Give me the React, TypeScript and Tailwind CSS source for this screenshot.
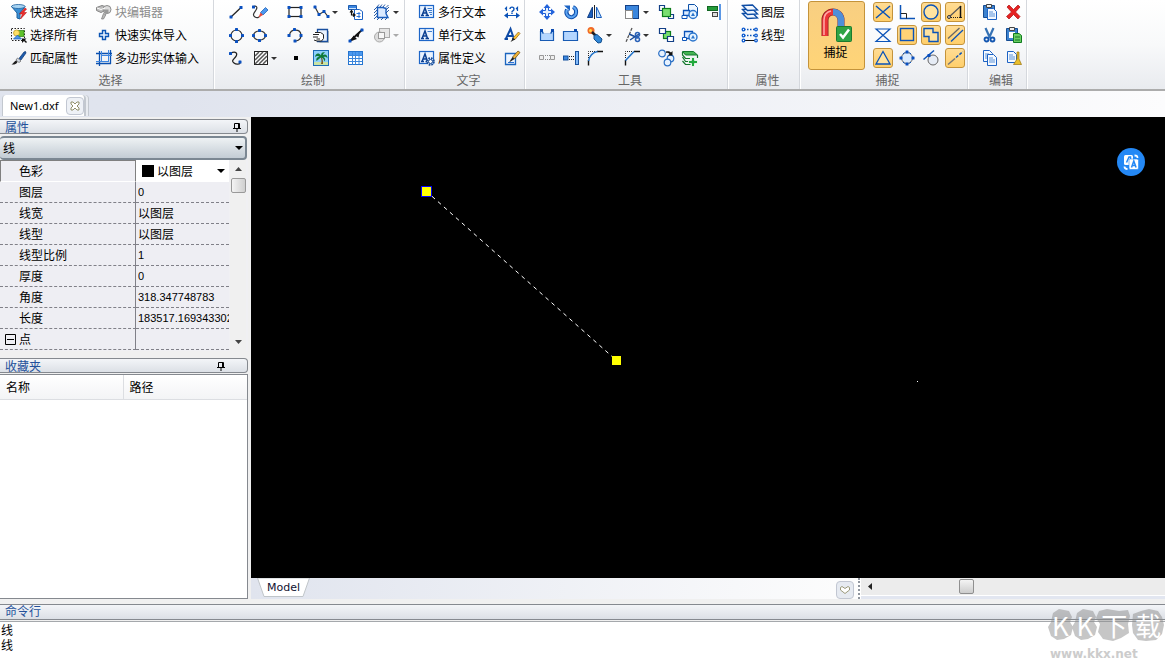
import type { ReactNode } from "react";

const BLUE = "#0b53b8";

const Dots = ({ at }: { at: number[][] }) => (
  <>
    {at.map(([x, y], i) => (
      <rect key={i} x={x - 1.5} y={y - 1.5} width="3" height="3" rx="0.5" fill="#0a50c0" />
    ))}
  </>
);

const Letter = ({ children }: { children?: ReactNode }) => (
  <>
    <rect x="1.500" y="2.500" width="14" height="12" fill="#eaf3ff" stroke="#1d66c8" strokeWidth="1.200" />
    <path d="M3 12.500h3M7.500 12.500h3.500M4 12.500 7 5l2.500 7.500M5 10h3.500" fill="none" stroke="#0a3f92" strokeWidth="1.500" />
    {children}
  </>
);

const Sheet = ({ x, y }: { x: number; y: number }) => (
  <g transform={`translate(${x} ${y})`}>
    <path d="M.5.5h6l3 3v8h-9z" fill="#f4f9ff" stroke="#1c62c4" />
    <path d="M2 4h4M2 6h6M2 8h6" stroke="#5a92d8" />
  </g>
);

const ICONS: Record<string, ReactNode> = {
  quickSelect: (
    <>
      <path d="M1.500 3.500 7 10v5l3 1v-6l5-6.500z" fill="#3a8fd4" stroke="#1d609d" />
      <ellipse cx="8.300" cy="3.500" rx="6.800" ry="2" fill="#a9d4f2" stroke="#1d609d" strokeWidth=".8" />
      <path d="M15 5 9.500 11h3l-2 5 6-6.500h-3L16.500 6z" fill="#ee2c2c" stroke="#b81414" strokeWidth=".6" />
    </>
  ),
  selectAll: (
    <>
      <rect x="1.500" y="2.500" width="13" height="12" fill="none" stroke="#222" strokeDasharray="1.500 1.500" />
      <rect x="8" y="4.500" width="6" height="6" fill="#5fc22c" stroke="#2a8012" strokeWidth=".7" />
      <circle cx="6.500" cy="7" r="3" fill="#ffe166" stroke="#b9921b" strokeWidth=".7" />
      <path d="m3.500 13 4-4 4 4z" fill="#4a95e8" stroke="#195bb0" strokeWidth=".7" />
      <path d="M12 12.500h4.500l-1.500 1.500 2 2-1 1-2-2-2 2z" fill="#111" />
    </>
  ),
  matchProps: (
    <>
      <path d="M9 9.500 14 3l1.500-.5.500 1.500-5 7z" fill="#1c5cae" stroke="#0b346e" strokeWidth=".7" />
      <path d="m7.500 9 3.500 3-2 1.500L6 11z" fill="#d5dde8" stroke="#444" strokeWidth=".6" />
      <path d="M6 11.500c-1.500 1-2.500 2.500-4.500 4 2.500.3 5-.3 6-2.500z" fill="#1c1c1c" />
    </>
  ),
  blockEditor: (
    <>
      <path d="M1.500 4.500 7 2.500l3 1v4l-4 2-4.500-2z" fill="#bdbdbd" stroke="#858585" />
      <circle cx="12" cy="6.500" r="4" fill="#ddd" stroke="#8b8b8b" />
      <path d="M8.500 6.500h5v4h-3.500z" fill="#999" />
      <path d="m6.500 16 2-5.500 2.500 1-2.500 4.500z" fill="#bbb" stroke="#777" strokeWidth=".7" />
      <path d="m2 5 4 1.500L10 5" stroke="#fff" fill="none" />
    </>
  ),
  quickImport: <path d="M7.500 4.500h3v3h3v3h-3v3h-3v-3h-3v-3h3z" fill="#e8f3ff" stroke="#0c55b4" strokeWidth="1.400" />,
  polyInput: (
    <>
      <path d="M4.500 2v15M15.500 1v14M1 4.500h16M1 14.500h15" stroke="#0a50b0" fill="none" strokeWidth="1.300" />
      <path d="M6.500 2v10.500M13.500 1v12M6 6.500h11M1 12.500h13" stroke="#3e86e0" fill="none" />
    </>
  ),
  line: (
    <>
      <path d="M4 14 14 4.500" stroke="#222" strokeWidth="1.300" />
      <Dots at={[[4, 14], [14, 4.500]]} />
    </>
  ),
  freehand: (
    <>
      <path d="M2 4c3-2 5 0 3 3s-4 5-1 7 5-1 5-1" fill="none" stroke="#333" strokeWidth="1.200" />
      <path d="m9.500 9.500 5-5 2.500 2.500-5 5z" fill="#4b97ee" stroke="#1458b0" strokeWidth=".7" />
      <path d="m9.500 9.500 2.500 2.500-4.500 2.500z" fill="#e84a3c" />
      <Dots at={[[2.500, 4]]} />
    </>
  ),
  rectangle: (
    <>
      <rect x="3" y="4.500" width="12" height="9" fill="none" stroke="#222" strokeWidth="1.200" />
      <Dots at={[[3, 4.500], [15, 4.500], [3, 13.500], [15, 13.500]]} />
    </>
  ),
  polyline: (
    <>
      <path d="m3 4 4 7.500 5-3 4 5" fill="none" stroke="#333" strokeWidth="1.200" />
      <Dots at={[[3, 4], [7, 11.500], [12, 8.500], [16, 13.500]]} />
    </>
  ),
  insertBlock: (
    <>
      <path d="M1.500 2.500h8v4h-8z" fill="#3c86e0" stroke="#1c5cb0" />
      <path d="M2 5.500h7" stroke="#cfe5ff" />
      <path d="M7.500 6.500h5l3 2v8h-8z" fill="#fff" stroke="#1c62c4" />
      <path d="M9.500 10.500h4M9.500 13.500h4M12 9v6" stroke="#2b72d6" />
      <path d="M4.500 8v4h3M3 9.500l1.500-2L6 9.500M6 10.500 8 12l-2 1.500" fill="none" stroke="#111" strokeWidth="1.200" />
    </>
  ),
  region: (
    <>
      <path d="M4.500 4.500H10l3 1v5l2 4h-10.500z" fill="#dbeaff" stroke="#1a5dbd" strokeWidth="1.400" />
      <path d="m4 4 2-2.500m1 2.500 2-2.500m1 2.500 2-2.500m1 3 2.500-2.500m-2.500 5 3-3m-3 6 3-3M1 7l3-3M1 10l3-3M1 13l3-3M1 16l3-3M4 17l2-2m2 2 2-2m2 2 2-2" stroke="#174d9c" strokeWidth=".9" />
    </>
  ),
  circle: (
    <>
      <circle cx="9.500" cy="9.500" r="5.500" fill="none" stroke="#333" strokeWidth="1.200" />
      <Dots at={[[9.500, 3.500], [3.500, 9.500], [15.500, 9.500], [9.500, 15.500]]} />
    </>
  ),
  ellipse: (
    <>
      <ellipse cx="8.500" cy="9.500" rx="6" ry="4.500" fill="none" stroke="#333" strokeWidth="1.200" />
      <Dots at={[[8.500, 4.500], [2.500, 9.500], [14.500, 9.500], [8.500, 14.500]]} />
    </>
  ),
  arc: (
    <>
      <path d="M3.500 9c1-6.500 11-6.500 11.500 0 0 3-2 5.500-5 6" fill="none" stroke="#333" strokeWidth="1.200" />
      <Dots at={[[3, 9.500], [8.500, 3.500], [15, 9.500], [9, 15]]} />
    </>
  ),
  blockPage: (
    <>
      <path d="M5.500 3.500h10v12h-10z" fill="#eaf3ff" stroke="#194f9f" strokeWidth="1.300" />
      <path d="M16.500 5v11.500h-9" stroke="#9ab" fill="none" />
      <path d="M3 6.500h5.500l3 2v4l-2 2.500H5l-3-1" fill="#fff" stroke="#222" />
      <path d="M1 8.500h6m-6 2.500h5M4.500 13H8" fill="none" stroke="#222" />
    </>
  ),
  arrowLine: (
    <>
      <path d="M3 15 15.500 3.500" stroke="#111" strokeWidth="1.700" />
      <path d="m3 15.500 3.500-6 3.500 3.500zM8 9.500l5-4.500-1.500 6.500z" fill="#111" />
      <Dots at={[[3, 15], [15, 4]]} />
    </>
  ),
  wipeout: (
    <>
      <rect x="6.500" y="2.500" width="10" height="9" fill="#e6e6e6" stroke="#aaa" />
      <circle cx="6.500" cy="11" r="5" fill="#ddd" stroke="#aaa" />
      <rect x="5.500" y="6.500" width="6" height="6" fill="#f7f7f7" stroke="#999" />
    </>
  ),
  spline: (
    <>
      <path d="M3.500 4.500c5-3 8 0 5 3.500s-4 4-1.500 6 6 1 6 0" fill="none" stroke="#222" strokeWidth="1.300" />
      <Dots at={[[3.500, 4.500], [13, 13]]} />
    </>
  ),
  hatch: (
    <>
      <rect x="3.500" y="2.500" width="13" height="13" fill="#fff" stroke="#222" />
      <path d="m4 7 4-4M4 11l8-8M4 15 16 3M8 15l8-8m-4 8 4-4" stroke="#555" strokeWidth="1.500" />
    </>
  ),
  point: <rect x="8" y="7" width="4" height="4" fill="#000" />,
  image: (
    <>
      <rect x="1.500" y="1.500" width="15" height="15" fill="#8ed0fa" stroke="#1c6cb6" />
      <path d="M2 13h14v3H2z" fill="#c9e3a4" />
      <path d="M8.500 8c1.500 3 1 5 .5 7h2c.3-3-.3-5-1.500-7z" fill="#7b5b24" />
      <path d="M9 6.500C6.500 3 3.500 4.500 3 8c2-1.500 3-1 4.500 0C4.500 8 4 10 4.500 12 7 10 8 9 9 8.500c2 .5 3 1.500 3.500 4 1.500-2 .5-3.500-1-4.500 2-.5 3 0 4 1.500 0-3.500-2-5-4.500-3.500 0-1 1-2 2-2.500-2-1-4 0-4 3z" fill="#0f7a38" />
    </>
  ),
  table: (
    <>
      <rect x="1.500" y="2.500" width="14" height="13" fill="#fff" stroke="#2474d0" />
      <path d="M2 3h13v3H2z" fill="#4c9af0" />
      <path d="M1.500 6.500h14m-14 3h14m-14 3h14M5.500 3v12.500M8.500 3v12.500m3.500-12.500v12.500" stroke="#3a86dc" />
    </>
  ),
  mtext: <Letter><path d="M9.500 5.500H14m-4 2h4m-3 2h3m-2 2h2" stroke="#3f7ed0" /></Letter>,
  stext: <Letter><path d="M9.500 5.500H14" stroke="#3f7ed0" /></Letter>,
  attdef: (
    <Letter>
      <circle cx="12.500" cy="12.500" r="3.300" fill="#dceaff" stroke="#174b96" strokeWidth="2" strokeDasharray="1.600 1" />
      <circle cx="12.500" cy="12.500" r="2" fill="#fff" stroke="#174b96" />
    </Letter>
  ),
  fieldWidth: (
    <>
      <path d="M3.500 8V4.500L2 6M14.500 8V4.500L13 6M4 12.500h10" fill="none" stroke={BLUE} strokeWidth="1.200" />
      <path d="M5 9.500 1 12.500l4 3zm8 0 4 3-4 3z" fill={BLUE} />
      <path d="M7 6c0-2.500 4-2.500 4 0S9 7.500 9 9m0 .5V11" fill="none" stroke={BLUE} strokeWidth="1.400" />
    </>
  ),
  editText: (
    <>
      <path d="M1.500 13h3.500m4 0h3M3 12.500 7.500 3 11 13M4.500 10h5" fill="none" stroke="#0e4aa5" strokeWidth="2" />
      <path d="m10 12 5.500-6 1.500 1.500-5 6z" fill="#ffc534" stroke="#8b5d12" strokeWidth=".7" />
      <path d="m10 12 2 1.500L7.500 16z" fill="#222" />
    </>
  ),
  editPage: (
    <>
      <path d="M2.500 4.500h10v11h-10z" fill="#eff6ff" stroke="#1b65be" strokeWidth="1.300" />
      <path d="M5 13.500h6" stroke="#2b72d6" />
      <path d="m9.500 8 5.500-6 2 1.500-5.500 6.500z" fill="#f2b638" stroke="#60400c" strokeWidth=".7" />
      <path d="m9.500 8 2 2L6 13.500z" fill="#222" />
    </>
  ),
  move: (
    <>
      <path d="M7.500 4h3v3.500H14v3h-3.500V14h-3v-3.500H4v-3h3.500z" fill="#e4f0ff" stroke="#1d5fd8" />
      <path d="M9 1 5.500 5h7zM9 17l-3.500-4h7zM1 9l4-3.500v7zM17 9l-4-3.500v7z" fill="#2464dc" />
    </>
  ),
  rotate: (
    <>
      <path d="M11 4c4.500 2 4 8.500-.5 10-4 1-7.500-3-5.500-7.500" fill="none" stroke="#0d4ba8" strokeWidth="4" />
      <path d="M11 4c4.500 2 4 8.500-.5 10-4 1-7.500-3-5.500-7.500" fill="none" stroke="#5da5f2" strokeWidth="2" />
      <path d="M2 2.500h6V8z" fill="#1a63c4" />
    </>
  ),
  mirror: (
    <>
      <path d="M6.500 4v10.500H1.500z" fill="#1a5fbe" stroke="#123f86" />
      <path d="M10.500 4v10.500h5z" fill="#b8dafc" stroke="#1a5fbe" />
      <path d="M8.500 2v14" stroke="#222" />
    </>
  ),
  scale: (
    <>
      <rect x="2.500" y="2.500" width="13" height="13" fill="#3b86dd" stroke="#123f86" />
      <rect x="2" y="7" width="8" height="10" fill="#fff" />
      <rect x="2.500" y="7.500" width="7" height="8" fill="none" stroke="#111" strokeDasharray="1 1" />
    </>
  ),
  front: (
    <>
      <path d="M2.500 2.500h5v5h-5zm9 9h5v4h-5z" fill="#fff" stroke="#123f86" strokeWidth="1.200" />
      <rect x="5.500" y="5.500" width="8" height="8" fill="#79df70" stroke="#0d7d1c" strokeWidth="1.200" />
    </>
  ),
  copyShape: (
    <>
      <path d="M7.500 7V1.500h6l3 3v8h-4" fill="#eef6ff" stroke="#0d50a7" />
      <path d="M2.500 7.500h6v5h-6z" fill="#deedff" stroke={BLUE} strokeWidth="1.300" />
      <path d="M1 12.500h5v3H1z" fill="#fff" stroke={BLUE} />
      <circle cx="12" cy="11.500" r="4" fill="#e6f4ff" stroke="#2b75cd" strokeWidth="1.400" />
      <path d="m12 9.500 2 3.500h-4z" fill="#2b75cd" />
    </>
  ),
  align: (
    <>
      <rect x="2.500" y="3.500" width="10" height="4" fill="#249b39" stroke="#116622" />
      <rect x="7.500" y="9.500" width="5" height="4" fill="#ddd" stroke="#444" />
      <path d="M15 1v16" stroke="#2474dc" strokeWidth="1.500" />
    </>
  ),
  breakOpen: (
    <>
      <path d="M2.500 5.500h2v1.500h9V5.500h2v9h-13z" fill="#b4d6ff" stroke="#185bb3" strokeWidth="1.200" />
      <path d="M6 6.500h6" stroke="#f4f8ff" strokeWidth="2" />
      <path d="M2 3h3v3H2zM13 3h3v3h-3z" fill="#0a4ab0" />
    </>
  ),
  breakPoint: (
    <>
      <path d="M1.500 5.500h14v9h-14z" fill="#b4d6ff" stroke="#185bb3" strokeWidth="1.200" />
      <path d="M12 3h3v3h-3z" fill="#0a4ab0" />
    </>
  ),
  explode: (
    <>
      <circle cx="5" cy="4.500" r="3.500" fill="#f16a28" />
      <circle cx="4.500" cy="4.500" r="1.500" fill="#ffdb45" />
      <path d="m6 6 4 4" stroke="#222" strokeWidth="2.500" />
      <path d="m8 9.500 3-1 5 4.500-1 3.500-3 .5-4-4z" fill="#3288d6" stroke="#114f90" />
    </>
  ),
  trim: (
    <>
      <path d="M9 2 3 16" stroke="#555" strokeWidth="1.300" strokeDasharray="3 1" />
      <path d="m6 8 9 4m-8 2 9-6" stroke="#164b9b" strokeWidth="1.500" />
      <circle cx="14.500" cy="8.500" r="2" fill="none" stroke="#2a62b8" strokeWidth="1.600" />
      <circle cx="14.500" cy="13.500" r="2" fill="none" stroke="#2a62b8" strokeWidth="1.600" />
    </>
  ),
  back: (
    <>
      <rect x="6.500" y="5.500" width="7" height="7" fill="#79df70" stroke="#0d7d1c" strokeWidth="1.200" />
      <path d="M2.500 2.500h6v5h-6zm8 8h6v5h-6z" fill="#fff" stroke="#123f86" strokeWidth="1.200" />
    </>
  ),
  offsetShape: (
    <>
      <path d="M3.500 5.500h8v7h-8z" fill="#deedff" stroke={BLUE} strokeWidth="1.300" />
      <path d="M1.500 11.500h4v3h-4z" fill="#fff" stroke={BLUE} />
      <circle cx="12" cy="11" r="4" fill="#e6f4ff" stroke="#2b75cd" strokeWidth="1.400" />
      <path d="m12 9 2 3.500h-4z" fill="#2b75cd" />
    </>
  ),
  stretch: (
    <>
      <path d="M1.500 6.500h4v4h-4zm11 0h4v4h-4z" fill="#eee" stroke="#999" />
      <path d="M7 6.500h5m-5 4h5" stroke="#888" strokeDasharray="1 1" />
    </>
  ),
  extend: (
    <>
      <rect x="1.500" y="7" width="4.500" height="4" fill="#3b86dd" stroke="#17529e" />
      <path d="M7 7.500h5m-5 3h5" stroke="#222" strokeDasharray="1 1" />
      <rect x="13.500" y="2.500" width="3" height="13" fill="#82bafa" stroke="#17529e" />
    </>
  ),
  fillet: (
    <>
      <path d="M2.500 9V2.500H9" fill="none" stroke="#222" strokeDasharray="1 1" />
      <path d="M2.500 11v5.500M11 2.500h6" stroke="#111" strokeWidth="1.400" />
      <path d="M2.500 12c1-5 4-8.500 9-9.500" fill="none" stroke="#2474c8" strokeWidth="1.500" />
    </>
  ),
  chamfer: (
    <>
      <path d="M2.500 9V2.500H9" fill="none" stroke="#222" strokeDasharray="1 1" />
      <path d="M2.500 11v5.500M11 2.500h6" stroke="#111" strokeWidth="1.400" />
      <path d="m2.500 11.500 8.500-9" stroke="#2474c8" strokeWidth="1.600" />
    </>
  ),
  cycle: (
    <>
      <g fill="#e7f2ff" stroke="#2a6fc4" strokeWidth="1.200">
        <circle cx="5" cy="4.500" r="3.300" />
        <circle cx="13.500" cy="9.500" r="3.300" />
        <circle cx="10.500" cy="13.500" r="3.300" />
      </g>
      <path d="M9 2.500c2-.5 4 0 5 1L15.500 2v4.500H11L12.500 5c-1-1-2-1.500-3.500-1z" fill="#111" />
    </>
  ),
  layerAdd: (
    <>
      <path d="m4.500 6-3-3.500h11l4 3.500z" fill="#45b454" stroke="#13792c" />
      <path d="M1.500 3v3l3 3.500H9M1.500 8l3 4.500h3M1.500 12l3 3.500h5M16.500 6v3" stroke="#13792c" strokeWidth="1.200" fill="none" />
      <path d="M10.500 8.500h3v3h3v3h-3v3h-3v-3h-3v-3h3z" fill="#20a83b" stroke="#fff" strokeWidth=".8" />
    </>
  ),
  layers: (
    <>
      {[10, 6, 2].map((y) => (
        <path key={y} transform={`translate(0 ${y})`} d="m1.500.5 10-.5 5 5-10 .500z" fill="#f2f8ff" stroke="#0e4da5" strokeWidth="1.300" />
      ))}
    </>
  ),
  linetype: (
    <>
      <path d="M3 3.500h12M3 9.500h12" stroke={BLUE} strokeWidth="1.300" strokeDasharray="1.500 1.500" />
      <path d="M4 14.500h11" stroke="#111" />
      {[3.500, 9.500, 14.500].map((y) => (
        <g key={y} fill="#fff" stroke="#0d5bd0" strokeWidth="1.300">
          <circle cx="2.500" cy={y} r="1.300" />
          <circle cx="15" cy={y} r="1.300" />
        </g>
      ))}
    </>
  ),
  snapCross: <path d="m2 3 14 12M16 3 2 15" stroke={BLUE} strokeWidth="1.500" />,
  snapPerp: (
    <>
      <path d="M2.500 2v13.500H17" fill="none" stroke={BLUE} strokeWidth="1.500" />
      <path d="M3 10.500h5.500v5" fill="none" stroke="#222" />
    </>
  ),
  snapCenter: <circle cx="9" cy="9" r="7" fill="#ffe3a0" stroke={BLUE} strokeWidth="1.400" />,
  snapAngle: (
    <>
      <path d="M3 14 15 3" fill="none" stroke="#555" strokeWidth="1.200" />
      <path d="M14.500 3v12" stroke="#111" strokeWidth="1.500" />
      <path d="M3 14.500h13" stroke="#222" strokeDasharray="1 1" />
      <circle cx="3" cy="14" r="1.500" fill="#ccc" stroke="#333" />
    </>
  ),
  snapNearest: <path d="M2 3h14L2 15.500h14z" fill="none" stroke={BLUE} strokeWidth="1.200" />,
  snapEnd: <rect x="2.500" y="2.500" width="13" height="12" fill="#ffd376" stroke={BLUE} strokeWidth="1.400" />,
  snapInsert: <path d="M2 2.500h9v4h5v9H7v-5H2z" fill="#ffe3a0" stroke={BLUE} strokeWidth="1.400" />,
  snapParallel: (
    <>
      <path d="M2 12.500 13.500 2" stroke="#666" strokeWidth="1.300" />
      <path d="M5 15.500 17 4" stroke={BLUE} strokeWidth="1.300" />
    </>
  ),
  snapMid: <path d="M9 2.500 16 15H2z" fill="#ffe3a0" stroke={BLUE} strokeWidth="1.300" />,
  snapQuad: (
    <>
      <circle cx="9" cy="9" r="5.500" fill="#dcecff" stroke="#666" />
      <Dots at={[[9, 3], [3, 9], [15, 9], [9, 15]]} />
      <path d="m5 5 1.500-1.500M13 5l-1.500-1.500M5 13l1.500 1.500M13 13l-1.500 1.500" stroke={BLUE} />
    </>
  ),
  snapTangent: (
    <>
      <circle cx="11" cy="11" r="5" fill="#e6ecf5" stroke="#666" />
      <path d="M1.500 10.500 12 1.500" stroke={BLUE} strokeWidth="1.500" />
      <Dots at={[[7, 6.500]]} />
    </>
  ),
  snapExtension: (
    <>
      <path d="m2 15.500 7-6" stroke="#777" strokeWidth="1.500" />
      <path d="m10 8.500 7-6" stroke={BLUE} strokeWidth="1.500" strokeDasharray="3 1.500" />
    </>
  ),
  paste: (
    <>
      <path d="M2.500 2.500h11v12h-11z" fill="#3c82cf" stroke="#164c92" />
      <path d="M5.500 1.500h5v3h-5z" fill="#eee" stroke="#444" />
      <Sheet x={6} y={5} />
    </>
  ),
  remove: (
    <path d="m2 4 2-2 4.500 4.500L13 2l2 2-4.500 5 4.500 4.500-2 2.500-4.500-4.500L4 16l-2.500-2.500L6.500 9z" fill="#e62222" stroke="#ae1010" strokeWidth=".7" />
  ),
  cut: (
    <>
      <path d="m4.500 2 4.500 10M12.500 2 8 12" stroke="#3672b5" strokeWidth="2.200" />
      <g fill="none" stroke="#1356b0" strokeWidth="1.800">
        <circle cx="5.500" cy="13.500" r="2" />
        <circle cx="11.500" cy="13.500" r="2" />
      </g>
    </>
  ),
  pasteBlock: (
    <>
      <path d="M1.500 2.500h11v12h-11z" fill="#3c82cf" stroke="#164c92" />
      <path d="M4.500 1.500h5v3h-5z" fill="#eee" stroke="#444" />
      <path d="M4 6h6v6H4z" fill="#fff" />
      <path d="M8.500 7.500h5.500l2.500 2v7h-8z" fill="#69cf60" stroke="#117a20" />
      <path d="M10 11h5m-5 3h5" stroke="#16752b" />
    </>
  ),
  copy: (
    <>
      <Sheet x={2} y={1} />
      <Sheet x={6} y={5} />
    </>
  ),
  purge: (
    <>
      <Sheet x={2} y={2} />
      <path d="M12 3h2v7l2.500 5.500h-8L12 10z" fill="#e9be2c" stroke="#9a7410" strokeWidth=".7" />
    </>
  ),
};

type Tool = { icon: string; name: string; menu?: boolean; disabled?: boolean } | null;

const t = (icon: string, name: string, menu = false, disabled = false): Tool => ({ icon, name, menu, disabled });

const DRAW_TOOLS: Tool[] = [
  t("line", "直线"), t("freehand", "徒手画"), t("rectangle", "矩形"), t("polyline", "多段线", true), t("insertBlock", "插入块"), t("region", "面域", true),
  t("circle", "圆"), t("ellipse", "椭圆"), t("arc", "圆弧"), t("blockPage", "块"), t("arrowLine", "引线"), t("wipeout", "遮罩", true, true),
  t("spline", "样条曲线"), t("hatch", "填充", true), t("point", "点"), t("image", "图像"), t("table", "表格"), null,
];

const EDIT_TOOLS: Tool[] = [
  t("move", "移动"), t("rotate", "旋转"), t("mirror", "镜像"), t("scale", "缩放", true), t("front", "前置"), t("copyShape", "复制实体"), t("align", "对齐"),
  t("breakOpen", "打断"), t("breakPoint", "打断于点"), t("explode", "分解", true), t("trim", "修剪", true), t("back", "后置"), t("offsetShape", "偏移"), null,
  t("stretch", "拉伸"), t("extend", "延伸"), t("fillet", "圆角"), t("chamfer", "倒角"), t("cycle", "循环"), t("layerAdd", "添加图层"), null,
];

const CLIPBOARD_TOOLS: Tool[] = [
  t("paste", "粘贴"), t("remove", "删除"),
  t("cut", "剪切"), t("pasteBlock", "粘贴为块"),
  t("copy", "复制"), t("purge", "清理"),
];

const SNAPS = [
  { icon: "snapCross", name: "交点", on: true },
  { icon: "snapPerp", name: "垂足", on: false },
  { icon: "snapCenter", name: "圆心", on: true },
  { icon: "snapAngle", name: "角度", on: true },
  { icon: "snapNearest", name: "最近点", on: false },
  { icon: "snapEnd", name: "端点", on: true },
  { icon: "snapInsert", name: "插入点", on: true },
  { icon: "snapParallel", name: "平行", on: true },
  { icon: "snapMid", name: "中点", on: true },
  { icon: "snapQuad", name: "象限点", on: false },
  { icon: "snapTangent", name: "切点", on: false },
  { icon: "snapExtension", name: "延长线", on: true },
];

const PROPERTIES = [
  { name: "图层", value: "0", numeric: true },
  { name: "线宽", value: "以图层", numeric: false },
  { name: "线型", value: "以图层", numeric: false },
  { name: "线型比例", value: "1", numeric: true },
  { name: "厚度", value: "0", numeric: true },
  { name: "角度", value: "318.347748783", numeric: true },
  { name: "长度", value: "183517.169343302", numeric: true },
];

function Icon({ name }: { name: string }) {
  return (
    <svg viewBox="0 0 18 18" className="size-[18px] shrink-0" aria-hidden="true">
      {ICONS[name]}
    </svg>
  );
}

function Caret({ className = "" }: { className?: string }) {
  return (
    <svg viewBox="0 0 8 4" className={`h-1 w-2 shrink-0 ${className}`} aria-hidden="true">
      <path d="M0 0h8L4 4z" fill="currentColor" />
    </svg>
  );
}

function ToolButton({ tool }: { tool: Tool }) {
  if (!tool) return <span />;
  return (
    <button
      type="button"
      aria-label={tool.name}
      disabled={tool.disabled}
      className="flex items-center gap-0.5 text-[#333] disabled:text-[#aaa]"
    >
      <Icon name={tool.icon} />
      {tool.menu && (
        <svg viewBox="0 0 6 3" className="h-[3px] w-1.5 shrink-0" aria-hidden="true">
          <path d="M0 0h6L3 3z" fill="currentColor" />
        </svg>
      )}
    </button>
  );
}

function LabelButton({ icon, text, disabled }: { icon: string; text: string; disabled?: boolean }) {
  return (
    <button
      type="button"
      disabled={disabled}
      className="flex items-center gap-0.5 whitespace-nowrap text-black disabled:text-[#8c8c8c]"
    >
      <Icon name={icon} />
      {text}
    </button>
  );
}

function Group({ title, className, children }: { title: string; className: string; children: ReactNode }) {
  return (
    <section
      className={`flex shrink-0 flex-col justify-between border-r border-[#d5d8dd] pt-0.5 shadow-[1px_0_0_#fff] ${className}`}
    >
      {children}
      <h2 className="h-[18px] pl-2 text-center leading-[18px] text-[#666]">{title}</h2>
    </section>
  );
}

function Ribbon() {
  return (
    <header className="flex h-[91px] shrink-0 overflow-hidden border-b-2 border-[#acacac] bg-linear-to-b from-white via-[#f8f9fa] to-[#e9ebef]">
      <Group title="选择" className="w-[214px]">
        <div className="grid auto-rows-[20px] grid-cols-[85px_auto] gap-y-[3px] pl-2.5">
          <LabelButton icon="quickSelect" text="快速选择" />
          <LabelButton icon="blockEditor" text="块编辑器" disabled />
          <LabelButton icon="selectAll" text="选择所有" />
          <LabelButton icon="quickImport" text="快速实体导入" />
          <LabelButton icon="matchProps" text="匹配属性" />
          <LabelButton icon="polyInput" text="多边形实体输入" />
        </div>
      </Group>
      <Group title="绘制" className="w-[191px]">
        <div className="grid auto-rows-[20px] grid-cols-[24px_35px_26px_35px_26px_30px] gap-y-[3px] pl-[13px]">
          {DRAW_TOOLS.map((tool, i) => (
            <ToolButton key={i} tool={tool} />
          ))}
        </div>
      </Group>
      <Group title="文字" className="w-[120px]">
        <div className="grid auto-rows-[20px] grid-cols-[85px_18px] gap-y-[3px] pl-[13px]">
          <LabelButton icon="mtext" text="多行文本" />
          <ToolButton tool={t("fieldWidth", "文字宽度")} />
          <LabelButton icon="stext" text="单行文本" />
          <ToolButton tool={t("editText", "编辑文字")} />
          <LabelButton icon="attdef" text="属性定义" />
          <ToolButton tool={t("editPage", "编辑属性")} />
        </div>
      </Group>
      <Group title="工具" className="w-[203px]">
        <div className="grid auto-rows-[20px] grid-cols-[24px_24px_37px_34px_24px_24px_18px] gap-y-[3px] pl-[13px]">
          {EDIT_TOOLS.map((tool, i) => (
            <ToolButton key={i} tool={tool} />
          ))}
        </div>
      </Group>
      <Group title="属性" className="w-[72px]">
        <div className="grid auto-rows-[20px] gap-y-[3px] pl-[13px]">
          <LabelButton icon="layers" text="图层" />
          <LabelButton icon="linetype" text="线型" />
        </div>
      </Group>
      <Group title="捕捉" className="w-[168px]">
        <div className="flex gap-2 pl-2">
          <button
            type="button"
            aria-pressed="true"
            className="-mt-px flex h-[69px] w-[57px] flex-col items-center rounded-[3px] border border-[#c4933a] bg-linear-to-b from-[#f8cf82] to-[#ffd477] pt-1.5 pr-0.5 leading-4"
          >
            <svg viewBox="0 0 36 36" className="size-9" aria-hidden="true">
              <path d="M7 28V12a8 8 0 0 1 16 0v8" fill="none" stroke="#8b1f22" strokeWidth="7" />
              <path d="M7 28V12a8 8 0 0 1 8-8" fill="none" stroke="#ec3438" strokeWidth="5.500" />
              <path d="M15 4a8 8 0 0 1 8 8v8" fill="none" stroke="#4f8fd9" strokeWidth="6.500" />
              <path d="M6 27V12c0-5 3-8 7-9" fill="none" stroke="#ffaaa8" strokeWidth="1.500" />
              <rect x="18.500" y="18.500" width="15" height="15" rx="1" fill="#2fa344" stroke="#1b7b2e" />
              <path d="m22 26 3 3.500 6-8" fill="none" stroke="#fff" strokeWidth="2.500" />
            </svg>
            捕捉
          </button>
          <div className="grid auto-rows-[20px] grid-cols-[repeat(4,20px)] gap-x-1 gap-y-[3px]">
            {SNAPS.map((snap) => (
              <button
                key={snap.icon}
                type="button"
                aria-label={snap.name}
                aria-pressed={snap.on}
                className="rounded-[3px] border border-transparent aria-pressed:border-[#c4933a] aria-pressed:bg-linear-to-b aria-pressed:from-[#ffdc94] aria-pressed:to-[#ffcf6b]"
              >
                <Icon name={snap.icon} />
              </button>
            ))}
          </div>
        </div>
      </Group>
      <Group title="编辑" className="w-[59px]">
        <div className="grid auto-rows-[20px] grid-cols-[24px_18px] gap-y-[3px] pl-[13px]">
          {CLIPBOARD_TOOLS.map((tool, i) => (
            <ToolButton key={i} tool={tool} />
          ))}
        </div>
      </Group>
    </header>
  );
}

function PanelHeader({ title, pinClass }: { title: string; pinClass: string }) {
  return (
    <div
      className={`flex h-[15px] shrink-0 items-center justify-between rounded-r-sm border border-l-0 border-[#85898f] bg-linear-to-b from-[#f3f5f8] to-[#dce0e6] pl-[5px] ${pinClass}`}
    >
      <h2 className="leading-none text-[#23509a]">{title}</h2>
      <button type="button" aria-label="固定">
        <svg viewBox="0 0 8 10" className="h-2.5 w-2" aria-hidden="true">
          <path d="M1.500 6V1.500h5V6M0 6.500h8M4 6.500V10" fill="none" stroke="#000" />
          <path d="M5.500 1v5.500" stroke="#000" />
        </svg>
      </button>
    </div>
  );
}

function PropertyPanel() {
  return (
    <section className="flex shrink-0 flex-col">
      <PanelHeader title="属性" pinClass="pr-1.5" />
      <div className="relative mt-0.5 mr-px">
        <select
          aria-label="实体类型"
          className="block h-6 w-full appearance-none rounded-sm border-2 border-l-0 border-[#7b8792] bg-linear-to-b from-[#eef2f4] to-[#c3ccd4] pl-[3px] leading-5"
        >
          <option>线</option>
        </select>
        <Caret className="pointer-events-none absolute top-2.5 right-1" />
      </div>
      <div className="flex h-[191px] gap-px bg-[#f0f0f3] pr-0.5">
        <table className="w-[229px] table-fixed border-separate border-spacing-0 self-start bg-[#eeeef3]">
          <colgroup>
            <col className="w-[136px]" />
            <col />
          </colgroup>
          <tbody>
            <tr className="h-[22px]">
              <th scope="row" className="border border-[#808080] border-b-white p-0 pl-[18px] text-left font-normal">
                色彩
              </th>
              <td className="bg-white p-0">
                <div className="relative flex items-center pl-1.5">
                  <span className="size-3 bg-black" />
                  <select aria-label="色彩" className="h-5 flex-1 appearance-none pl-[3px] leading-5">
                    <option>以图层</option>
                  </select>
                  <Caret className="pointer-events-none absolute right-1" />
                </div>
              </td>
            </tr>
            {PROPERTIES.map((p) => (
              <tr key={p.name} className="h-[21px]">
                <th
                  scope="row"
                  className="border-r border-b border-[#808088] p-0 pl-[19px] text-left font-normal [border-bottom-style:dashed]"
                >
                  {p.name}
                </th>
                <td className="overflow-hidden border-b border-dashed border-[#808088] p-0">
                  <input
                    aria-label={p.name}
                    defaultValue={p.value}
                    className={`block h-5 w-full pl-0.5 leading-5 ${
                      p.numeric ? "font-['Liberation_Sans',sans-serif] text-[11px]" : "text-[12px]"
                    }`}
                  />
                </td>
              </tr>
            ))}
            <tr className="h-[21px]">
              <th
                scope="row"
                className="border-r border-b border-[#808088] p-0 pl-[5px] text-left font-normal [border-bottom-style:dashed]"
              >
                <button type="button" aria-expanded="true" className="flex items-center gap-[3px]">
                  <svg viewBox="0 0 11 11" className="size-[11px]" aria-hidden="true">
                    <path d="M.5.5h10v10H.5zM2 5.500h7" fill="none" stroke="#000" />
                  </svg>
                  点
                </button>
              </th>
              <td className="border-b border-dashed border-[#808088]" />
            </tr>
          </tbody>
        </table>
        <div className="flex flex-1 flex-col items-center bg-[#f0f0f0]">
          <button type="button" aria-label="向上滚动" className="flex h-[18px] w-full items-center justify-center">
            <svg viewBox="0 0 7 4" className="h-1 w-[7px]" aria-hidden="true">
              <path d="M0 4h7L3.500 0z" fill="#444" />
            </svg>
          </button>
          <div className="h-[15px] w-[15px] rounded-xs border border-[#999] bg-linear-to-r from-[#f4f4f4] to-[#cfcfcf]" />
          <button type="button" aria-label="向下滚动" className="mt-auto flex h-[18px] w-full items-center justify-center">
            <svg viewBox="0 0 7 4" className="h-1 w-[7px]" aria-hidden="true">
              <path d="M0 0h7L3.500 4z" fill="#444" />
            </svg>
          </button>
        </div>
      </div>
    </section>
  );
}

function FavoritesPanel() {
  return (
    <section className="mt-[7px] flex min-h-0 flex-1 flex-col">
      <PanelHeader title="收藏夹" pinClass="pr-[22px]" />
      <div className="mt-px flex-1 border border-l-0 border-[#85898f] bg-white">
        <table className="w-full table-fixed">
          <thead>
            <tr className="h-6 bg-linear-to-b from-white to-[#f3f4f6] text-left">
              <th className="w-[123px] border-r border-b border-[#dcdee2] p-0 pl-1.5 font-normal">名称</th>
              <th className="border-b border-[#dcdee2] p-0 pl-1.5 font-normal">路径</th>
            </tr>
          </thead>
        </table>
      </div>
    </section>
  );
}

function FileTabs() {
  return (
    <nav className="flex h-[26px] shrink-0 items-end bg-linear-to-r from-[#e0e4ee] from-15% to-[#fcfcfd] pb-px pl-0.5">
      <div className="flex h-[21px] items-center gap-[7px] rounded-t-sm border-r-2 border-l border-[#c3c8cf] bg-white pl-[7px] shadow-[2px_0_0_#e9ecf1,3px_0_0_#c3c8cf]">
        <a href="#new1" className="font-['Noto_Sans',sans-serif] text-[11px] leading-4">
          New1.dxf
        </a>
        <button
          type="button"
          aria-label="关闭"
          className="flex size-[18px] items-center justify-center rounded-sm border border-[#c2c7d2] bg-[#eef1f6]"
        >
          <svg viewBox="0 0 10 10" className="size-2.5" aria-hidden="true">
            <path d="M1 1h2l2 2 2-2h2v2L7 5l2 2v2H7L5 7 3 9H1V7l2-2-2-2z" fill="#fff" stroke="#85835c" strokeWidth=".9" />
          </svg>
        </button>
      </div>
    </nav>
  );
}

function DrawingArea() {
  return (
    <main className="relative min-h-0 flex-1 overflow-hidden bg-black">
      <svg className="block h-full w-full" role="img" aria-label="绘图区">
        <path d="M175 74 365 243" stroke="#fff" strokeDasharray="4 4" />
        <rect x="170" y="69" width="11" height="11" fill="#0000ff" />
        <rect x="171" y="70" width="9" height="9" fill="#ffff00" />
        <rect x="361" y="239" width="9" height="9" fill="#ffff00" />
        <rect x="666" y="264" width="1" height="1" fill="#fff" />
      </svg>
      <button
        type="button"
        aria-label="翻译"
        className="absolute top-[31px] right-5 flex size-7 items-center justify-center rounded-full bg-[#2488f5]"
      >
        <svg viewBox="0 0 16 16" className="size-4" aria-hidden="true">
          <rect x="1" y="1" width="9" height="10" rx="1.500" fill="#fff" />
          <path d="M3.500 8.500 6 3h1.500v2" stroke="#2488f5" fill="none" strokeWidth="1.500" />
          <rect x="6" y="5" width="9.500" height="10.500" rx="1.500" fill="#fff" stroke="#2488f5" strokeWidth=".6" />
          <path d="m8.500 13.500 2.300-6.500 2.300 6.500M9.500 11.500h3" stroke="#2488f5" fill="none" strokeWidth="1.500" />
          <path d="M11.500 1.500c2.500 0 3 .5 3 2.500M1.500 12.500c0 2 1 2.500 3 2.500" stroke="#fff" strokeWidth="1.800" fill="none" />
        </svg>
      </button>
    </main>
  );
}

function LayoutBar() {
  return (
    <footer className="flex h-[21px] shrink-0">
      <div className="flex flex-1 items-start justify-between bg-linear-to-r from-[#e0e4ee] to-[#fdfdfd] pr-1 pl-1.5">
        <button
          type="button"
          className="relative h-[19px] w-[53px] font-['DejaVu_Sans',sans-serif] text-[11px] leading-4 text-[#101030]"
        >
          <svg viewBox="0 0 53 19" className="absolute inset-0 h-full w-full" aria-hidden="true">
            <path d="M.5 0 7 18.500h39L52.500 0z" fill="#fff" stroke="#c0c5c9" />
          </svg>
          <span className="relative">Model</span>
        </button>
        <button
          type="button"
          aria-label="布局列表"
          className="mt-[3px] flex size-[18px] items-center justify-center rounded-sm border border-[#c2c7d2] bg-[#e6eaf1]"
        >
          <svg viewBox="0 0 10 8" className="h-2 w-2.5" aria-hidden="true">
            <path d="M.5 1.500 2 .5l3 2 3-2 1.500 1V4L5 7.500.5 4z" fill="#fff" stroke="#85835c" strokeWidth=".8" />
          </svg>
        </button>
      </div>
      <div className="w-[3px] border-l-2 border-dotted border-[#8f959e] bg-white" />
      <div className="w-[304px] border-b-[3px] border-[#e2e6f0]">
        <div className="flex h-[18px] items-center border-b border-white bg-[#ececec]">
          <button type="button" aria-label="向左滚动" className="flex h-full w-[17px] items-center justify-center">
            <svg viewBox="0 0 4 7" className="h-[7px] w-1" aria-hidden="true">
              <path d="M4 0v7L0 3.500z" fill="#222" />
            </svg>
          </button>
          <div className="ml-[81px] size-[15px] rounded-xs border border-[#8f8f8f] bg-linear-to-b from-[#f4f4f4] to-[#cdcdcd]" />
        </div>
      </div>
    </footer>
  );
}

function Watermark() {
  return (
    <div className="pointer-events-none absolute right-0 bottom-0 w-[117px]">
      <svg viewBox="0 0 117 34" className="absolute inset-x-0 top-0 h-[34px] w-full" aria-hidden="true">
        <path
          d="m5 5 6-4 10 2 3 6-2 5 3 5-2 8-7 4-7 1-6-4-3-9 3-5zm24 0 6-4 10 2 3 6-2 5 3 5-2 8-7 4-7 1-6-4-3-9 3-5zm22-2 8-2 12 2 9-1 2 6-2 8 1 9-8 5-8 3-10-2-5-7 2-8-4-6zm34 3 8-3 8-2 9 2 4 6 2 8-2 9-6 6-10 1-8-1-5-7-1-8z"
          fill="#8e8e8e"
          fillOpacity=".5"
        />
      </svg>
      <p className="relative flex h-[34px] items-center justify-around font-['Noto_Sans_CJK_SC',sans-serif] text-[26px] leading-none text-white">
        <span>K</span>
        <span>K</span>
        <span>下</span>
        <span>载</span>
      </p>
      <p className="relative h-5 pl-0.5 font-['DejaVu_Sans',sans-serif] text-[12px] leading-6 font-bold text-[#cccccc]">
        www.kkx.net
      </p>
    </div>
  );
}

export default function App() {
  return (
    <div className="relative flex h-screen flex-col overflow-hidden bg-[#f0f0f0] font-['Noto_Sans_CJK_SC',sans-serif] text-[12px] leading-4 text-black">
      <Ribbon />
      <FileTabs />
      <div className="flex min-h-0 flex-1 gap-[3px]">
        <aside className="flex w-[248px] shrink-0 flex-col pt-0.5">
          <PropertyPanel />
          <FavoritesPanel />
        </aside>
        <div className="flex min-w-0 flex-1 flex-col">
          <DrawingArea />
          <LayoutBar />
        </div>
      </div>
      <section className="mt-[5px] shrink-0">
        <div className="border-y border-[#85898f] bg-linear-to-b from-[#f3f5f8] to-[#dce0e6] pl-[5px]">
          <label htmlFor="command" className="block h-3.5 leading-3 text-[#23509a]">
            命令行
          </label>
        </div>
        <textarea
          id="command"
          defaultValue={"线\n线"}
          className="mt-px block h-[41px] w-full resize-none border-t border-[#a5a8ac] bg-white pl-px leading-[15px] outline-none"
        />
      </section>
      <Watermark />
    </div>
  );
}
